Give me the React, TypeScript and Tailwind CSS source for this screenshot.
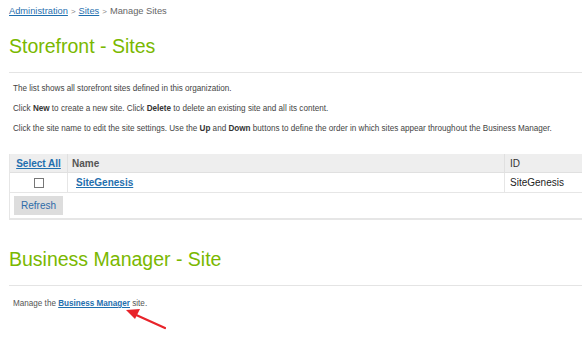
import React from 'react';

function App() {
  return (
    <div className="w-[582px] h-[338px] overflow-hidden bg-white font-['Liberation_Sans',Arial,sans-serif] text-[#444]">
      {/* Breadcrumb */}
      <div className="pl-[9px] pt-[5px] text-[9.3px] leading-[13px] text-[#666]">
        <a href="#" className="text-[#1f6fae] underline">Administration</a>
        <span className="mx-[3px] text-[8px] text-[#888]">&gt;</span>
        <a href="#" className="text-[#1f6fae] underline">Sites</a>
        <span className="mx-[3px] text-[8px] text-[#888]">&gt;</span>
        <span>Manage Sites</span>
      </div>

      <h1 className="mt-[16px] pl-[9px] text-[19.5px] leading-[24px] text-[#7ab800] font-normal">Storefront - Sites</h1>
      <div className="ml-[9px] mt-[14px] border-t border-[#e4e4e4]" />

      <div className="mt-[6px] pl-[13px] text-[8.15px] leading-[20px] text-[#444]">
        <div>The list shows all storefront sites defined in this organization.</div>
        <div>
          Click <b className="font-semibold text-[#333]">New</b> to create a new site. Click{' '}
          <b className="font-semibold text-[#333]">Delete</b> to delete an existing site and all its content.
        </div>
        <div>
          Click the site name to edit the site settings. Use the <b className="font-semibold text-[#333]">Up</b> and{' '}
          <b className="font-semibold text-[#333]">Down</b> buttons to define the order in which sites appear throughout the Business Manager.
        </div>
      </div>

      {/* Sites table */}
      <div className="mt-[15px] ml-[9px] w-[600px] border-l border-b-[2px] border-[#e6e6e6] text-[10px]">
        <div className="flex h-[19px] bg-[#eeeeee] border-b border-[#e0e0e0]">
          <div className="w-[58px] flex items-center justify-center border-r border-[#e0e0e0]">
            <a href="#" className="font-bold text-[#1f6fae] underline">Select All</a>
          </div>
          <div className="w-[437px] flex items-center pl-[4px] border-r border-[#e0e0e0] font-bold text-[#555]">Name</div>
          <div className="flex-1 flex items-center pl-[5px] text-[#333]">ID</div>
        </div>
        <div className="flex h-[20px] border-b border-[#e6e6e6]">
          <div className="w-[58px] flex items-center justify-center border-r border-[#e6e6e6]">
            <span className="block w-[10px] h-[10px] border border-[#777] bg-white" />
          </div>
          <div className="w-[437px] flex items-center pl-[8px] border-r border-[#e6e6e6]">
            <a href="#" className="font-bold text-[#1f6fae] underline">SiteGenesis</a>
          </div>
          <div className="flex-1 flex items-center pl-[5px] text-[#222]">SiteGenesis</div>
        </div>
        <div className="h-[25px] pl-[4px] pt-[3px]">
          <button className="h-[19px] w-[49px] bg-[#dddddd] text-[#2d6ca8] text-[10px] leading-[19px]">Refresh</button>
        </div>
      </div>

      <h2 className="mt-[27px] pl-[9px] text-[19.5px] leading-[24px] text-[#7ab800] font-normal">Business Manager - Site</h2>
      <div className="ml-[9px] mt-[14px] border-t border-[#e4e4e4]" />

      <div className="relative mt-[10px] pl-[13px] text-[8.15px] leading-[16px] text-[#555]">
        Manage the{' '}
        <a href="#" className="font-bold text-[#1f6fae] underline">Business Manager</a> site.
        <svg className="absolute left-[120px] top-[8px]" width="56" height="32" viewBox="0 0 56 32">
          <line x1="45" y1="24" x2="14" y2="10" stroke="#e8232a" strokeWidth="2.2" strokeLinecap="round" />
          <polygon points="6,6 20,5 15,15" fill="#e8232a" />
        </svg>
      </div>
    </div>
  );
}

export default App;
